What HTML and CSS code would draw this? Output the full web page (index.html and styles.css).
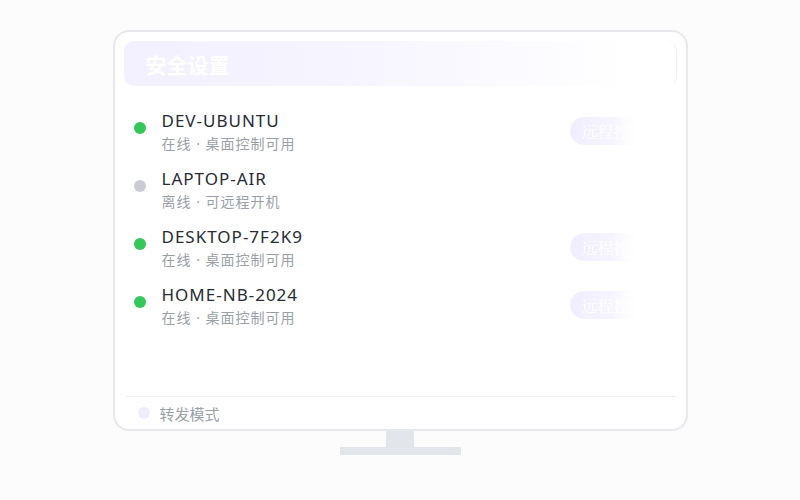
FILE: index.html
```html
<!DOCTYPE html>
<html lang="zh-CN">
<head>
  <meta charset="UTF-8">
  <title>设备列表</title>
  <link rel="stylesheet" href="styles.css">
</head>
<body>

  <div class="scene">
    <div class="monitor">
      <div class="header">
        <h2>安全设置</h2>
      </div>

      <ul class="devices">
        <li class="device">
          <span class="dot online"></span>
          <div class="info">
            <div class="name">DEV-UBUNTU</div>
            <div class="status">在线 · 桌面控制可用</div>
          </div>
          <button class="remote">远程控制</button>
        </li>
        <li class="device">
          <span class="dot offline"></span>
          <div class="info">
            <div class="name">LAPTOP-AIR</div>
            <div class="status">离线 · 可远程开机</div>
          </div>
        </li>
        <li class="device">
          <span class="dot online"></span>
          <div class="info">
            <div class="name">DESKTOP-7F2K9</div>
            <div class="status">在线 · 桌面控制可用</div>
          </div>
          <button class="remote">远程控制</button>
        </li>
        <li class="device">
          <span class="dot online"></span>
          <div class="info">
            <div class="name">HOME-NB-2024</div>
            <div class="status">在线 · 桌面控制可用</div>
          </div>
          <button class="remote">远程控制</button>
        </li>
      </ul>

      <div class="footer">
        <span class="dot relay"></span>
        <span class="mode">转发模式</span>
      </div>
    </div>

    <div class="neck"></div>
    <div class="base"></div>
  </div>

</body>
</html>
```

FILE: styles.css
```css
* {
  box-sizing: border-box;
}

body {
  margin: 0;
  background: #fcfcfd;
  font-family: "Noto Sans", "Noto Sans CJK SC", sans-serif;
}

.scene {
  display: flex;
  flex-direction: column;
  align-items: center;
  padding-top: 30px;
}

.monitor {
  width: 575px;
  height: 401px;
  background: #ffffff;
  border: 2px solid #e6e8ec;
  border-radius: 16px;
  display: flex;
  flex-direction: column;
  padding: 9px 0 0;
}

.header {
  height: 45px;
  margin: 0 9px;
  border-radius: 10px;
  background: linear-gradient(90deg, #f3f0ff 0%, #f7f5ff 45%, #ffffff 92%);
  border-right: 1px solid #eceef2;
  display: flex;
  align-items: center;
  padding-left: 22px;
}

.header h2 {
  margin: 0;
  font-family: "Noto Sans CJK SC", sans-serif;
  font-size: 21px;
  font-weight: 700;
  color: #ffffff;
}

.devices {
  list-style: none;
  margin: 0;
  padding: 23px 10px 0 19px;
  flex: 1;
  display: flex;
  flex-direction: column;
  gap: 14px;
}

.device {
  display: flex;
  align-items: center;
  height: 44px;
}

.dot {
  width: 12px;
  height: 12px;
  border-radius: 50%;
  flex-shrink: 0;
}

.device .dot {
  margin: 0 16px 6px 0;
}

.online {
  background: #34c759;
}

.offline {
  background: #c9ccd3;
}

.relay {
  background: #efedfd;
}

.info {
  flex: 1;
}

.name {
  font-size: 17px;
  line-height: 24px;
  color: #262b34;
  letter-spacing: 1px;
}

.status {
  font-family: "Noto Sans", "Noto Sans CJK SC", sans-serif;
  font-size: 14px;
  line-height: 21px;
  letter-spacing: 1px;
  color: #9a9fa8;
}

.remote {
  width: 106px;
  height: 28px;
  border: none;
  border-radius: 14px;
  padding: 0 0 0 12px;
  text-align: left;
  font-family: "Noto Serif CJK SC", serif;
  font-size: 16px;
  color: #ffffff;
  background: linear-gradient(90deg, #f0edff 0%, #f6f4ff 40%, #ffffff 70%);
  -webkit-mask-image: linear-gradient(90deg, #000 40%, transparent 68%);
  mask-image: linear-gradient(90deg, #000 40%, transparent 68%);
}

.footer {
  margin: 0 10px 0 11px;
  height: 33px;
  border-top: 1px solid #eef0f4;
  display: flex;
  align-items: center;
  padding-left: 12px;
}

.footer .dot {
  margin-right: 10px;
}

.mode {
  font-family: "Noto Sans CJK SC", sans-serif;
  font-size: 15px;
  color: #9a9fa8;
}

.neck {
  width: 28px;
  height: 16px;
  background: #e2e5e9;
}

.base {
  width: 121px;
  height: 8px;
  background: #e2e5e9;
}
```
